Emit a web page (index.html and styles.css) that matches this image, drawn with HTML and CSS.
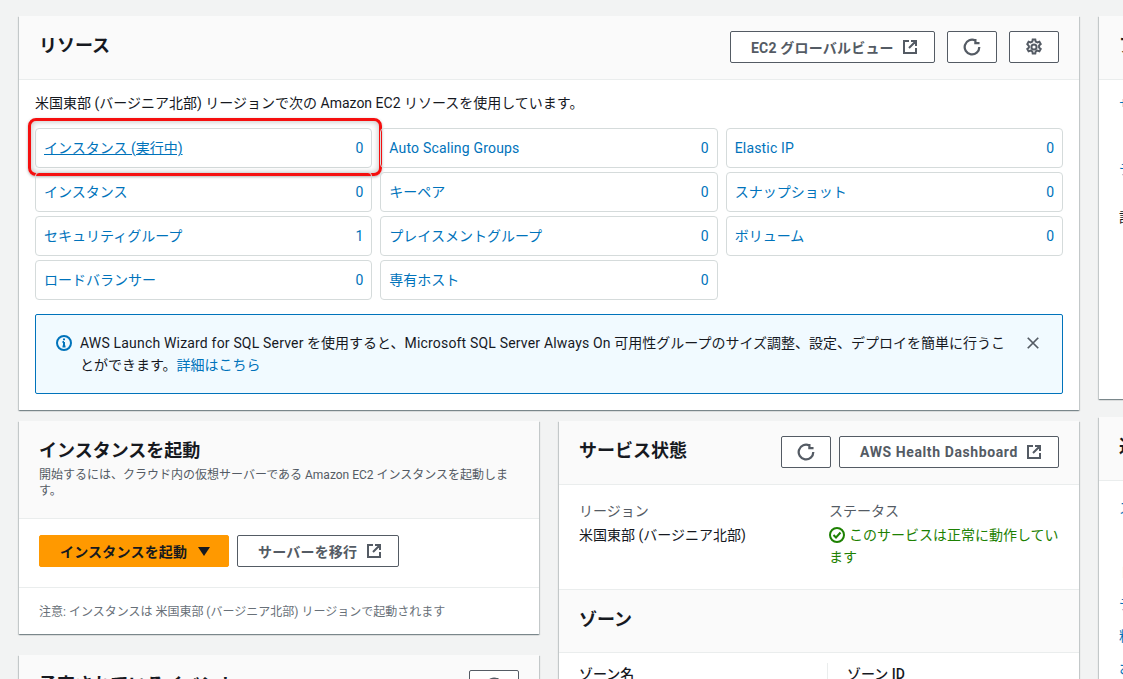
FILE: index.html
```html
<!DOCTYPE html>
<html lang="ja">
  <head>
    <meta charset="UTF-8" />
    <title>EC2 ダッシュボード</title>
    <link rel="stylesheet" href="styles.css">
  </head>
  <body>
    <div class="page">
      <div class="main">
        <section class="card">
          <div class="card-head">
            <h2>リソース</h2>
            <div class="actions">
              <button class="btn global">EC2 グローバルビュー
                <svg class="icon" viewBox="0 0 16 16"><path d="M7 2H2v12h12V9M9 2h5v5M14 2L7 9" /></svg>
              </button>
              <button class="btn square">
                <svg class="icon large" viewBox="0 0 16 16"><path d="M14.5 8A6.5 6.5 0 1 1 11 2.3M11 .8v3.7h3.7" /></svg>
              </button>
              <button class="btn square">
                <svg class="icon large" viewBox="0 0 18 18"><circle cx="9" cy="9" r="2.6" /><path d="M7.7 1.5h2.6l.4 2.1 1.7.9 2-.7 1.3 2.3-1.6 1.4v2l1.6 1.4-1.3 2.3-2-.7-1.7.9-.4 2.1H7.7l-.4-2.1-1.7-.9-2 .7-1.3-2.3 1.6-1.4V8L2.3 6.1l1.3-2.3 2 .7 1.7-.9z" /></svg>
              </button>
            </div>
          </div>
          <div class="card-body">
            <p class="intro">米国東部 (バージニア北部) リージョンで次の Amazon EC2 リソースを使用しています。</p>
            <div class="resource-grid">
              <a class="resource active"><span class="name">インスタンス (実行中)</span><span>0</span></a>
              <a class="resource"><span class="en">Auto Scaling Groups</span><span>0</span></a>
              <a class="resource"><span class="en">Elastic IP</span><span>0</span></a>
              <a class="resource"><span>インスタンス</span><span>0</span></a>
              <a class="resource"><span>キーペア</span><span>0</span></a>
              <a class="resource"><span>スナップショット</span><span>0</span></a>
              <a class="resource"><span>セキュリティグループ</span><span>1</span></a>
              <a class="resource"><span>プレイスメントグループ</span><span>0</span></a>
              <a class="resource"><span>ボリューム</span><span>0</span></a>
              <a class="resource"><span>ロードバランサー</span><span>0</span></a>
              <a class="resource"><span>専有ホスト</span><span>0</span></a>
            </div>
            <div class="notice">
              <svg class="info" viewBox="0 0 16 16"><circle cx="8" cy="8" r="7" /><path d="M8 7v4.5M6.5 11.5h3M6.5 7H8" /><path d="M8 3.6v1.6" /></svg>
              <p><span class="en">AWS Launch Wizard for SQL Server</span> を使用すると、<span class="en">Microsoft SQL Server Always On</span> 可用性グループのサイズ調整、設定、デプロイを簡単に行うことができます。<a>詳細はこちら</a></p>
              <svg class="close" viewBox="0 0 16 16"><path d="M2 2l12 12M14 2L2 14" /></svg>
            </div>
          </div>
        </section>

        <div class="columns">
          <div class="column">
            <section class="card">
              <div class="card-head launch-head">
                <h2>インスタンスを起動</h2>
                <p class="sub">開始するには、クラウド内の仮想サーバーである Amazon EC2 インスタンスを起動します。</p>
              </div>
              <div class="launch-actions">
                <button class="btn primary">インスタンスを起動 <i class="caret"></i></button>
                <button class="btn migrate">サーバーを移行
                  <svg class="icon" viewBox="0 0 16 16"><path d="M7 2H2v12h12V9M9 2h5v5M14 2L7 9" /></svg>
                </button>
              </div>
              <div class="launch-note">注意: インスタンスは 米国東部 (バージニア北部) リージョンで起動されます</div>
            </section>
            <section class="card">
              <div class="card-head">
                <h2>予定されているイベント</h2>
                <div class="actions">
                  <button class="btn square">
                    <svg class="icon large" viewBox="0 0 16 16"><path d="M14.5 8A6.5 6.5 0 1 1 11 2.3M11 .8v3.7h3.7" /></svg>
                  </button>
                </div>
              </div>
            </section>
          </div>

          <div class="column">
            <section class="card">
              <div class="card-head">
                <h2>サービス状態</h2>
                <div class="actions tight">
                  <button class="btn square">
                    <svg class="icon large" viewBox="0 0 16 16"><path d="M14.5 8A6.5 6.5 0 1 1 11 2.3M11 .8v3.7h3.7" /></svg>
                  </button>
                  <button class="btn health">AWS Health Dashboard
                    <svg class="icon" viewBox="0 0 16 16"><path d="M7 2H2v12h12V9M9 2h5v5M14 2L7 9" /></svg>
                  </button>
                </div>
              </div>
              <div class="status-grid">
                <div>
                  <div class="label">リージョン</div>
                  <div>米国東部 (バージニア北部)</div>
                </div>
                <div>
                  <div class="label">ステータス</div>
                  <div class="ok">
                    <svg class="check" viewBox="0 0 16 16"><circle cx="8" cy="8" r="7" /><path d="M4.5 8l2.5 2.5 4.5-5" /></svg>このサービスは正常に動作しています
                  </div>
                </div>
              </div>
              <div class="card-head zone-head"><h2>ゾーン</h2></div>
              <div class="zone-table">
                <div>ゾーン名</div>
                <div class="zone-id">ゾーン ID</div>
              </div>
            </section>
          </div>
        </div>
      </div>

      <div class="side">
        <section class="card side-top">
          <div class="card-head"><h2>アカウントの属性</h2></div>
          <div class="side-links">
            <a class="row-1">サポートされているプラットフォーム</a>
            <a class="row-2">デフォルト VPC</a>
            <p>設定</p>
          </div>
        </section>
        <section class="card">
          <div class="card-head"><h2>追加情報</h2></div>
          <div class="side-links more">
            <a>スタートガイド</a>
            <a>ドキュメント</a>
            <a>デベロッパーフォーラム</a>
            <a>料金</a>
            <a>お問い合わせ</a>
          </div>
        </section>
      </div>
    </div>
  </body>
</html>
```

FILE: styles.css
```css
html,
body {
  height: 100%;
}

body {
  margin: 0;
  overflow: hidden;
  background-color: #f2f3f3;
  color: #16191f;
  font-family: Roboto, "Noto Sans CJK JP", sans-serif;
  font-size: 14px;
  line-height: 22px;
}

.page {
  display: flex;
  gap: 20px;
  width: 1400px;
  padding: 16px 0 0 19px;
}

.main {
  width: 1060px;
  flex-shrink: 0;
}

.side {
  width: 300px;
  flex-shrink: 0;
}

.card {
  background-color: #fff;
  box-shadow: 0 1px 1px 0 rgba(0, 28, 36, 0.3), 1px 1px 1px 0 rgba(0, 28, 36, 0.15), -1px 1px 1px 0 rgba(0, 28, 36, 0.15);
}

.card-head {
  display: flex;
  justify-content: space-between;
  align-items: flex-start;
  height: 64px;
  padding: 15px 20px 0;
  box-sizing: border-box;
  background-color: #fafafa;
  border-bottom: 1px solid #eaeded;
}

.card-head h2 {
  margin: 1px 0 0;
  font-size: 18px;
  line-height: 28px;
  font-weight: 700;
}

.en {
  letter-spacing: 0.18px;
}

.actions {
  display: flex;
  gap: 12px;
}

.actions.tight {
  gap: 8px;
}

.btn {
  display: inline-flex;
  align-items: center;
  justify-content: space-between;
  height: 32px;
  padding: 0 16px 0 20px;
  box-sizing: border-box;
  background-color: #fff;
  border: 1px solid #545b64;
  border-radius: 2px;
  color: #545b64;
  font-family: inherit;
  font-size: 14px;
  font-weight: 700;
  letter-spacing: 0.2px;
  white-space: nowrap;
}

.btn.global {
  width: 205px;
}

.btn.health {
  width: 220px;
  letter-spacing: 0.6px;
}

.btn.migrate {
  width: 162px;
}

.btn.square {
  width: 50px;
  padding: 0;
  justify-content: center;
}

.btn.primary {
  width: 190px;
  padding-right: 18px;
  background-color: #ff9900;
  border-color: #ff9900;
  color: #16191f;
}

.icon {
  width: 16px;
  height: 16px;
  fill: none;
  stroke: #545b64;
  stroke-width: 2;
}

.icon.large {
  width: 18px;
  height: 18px;
}

.caret {
  width: 0;
  height: 0;
  border-left: 6px solid transparent;
  border-right: 6px solid transparent;
  border-top: 9px solid #16191f;
}

.card-body {
  padding: 12px 16px 16px;
}

.intro {
  margin: 0 0 14px;
}

.resource-grid {
  display: grid;
  grid-template-columns: repeat(3, 1fr);
  gap: 4px 8px;
}

.resource {
  position: relative;
  display: flex;
  justify-content: space-between;
  height: 40px;
  padding: 8px;
  box-sizing: border-box;
  border: 1px solid #d5dbdb;
  border-radius: 4px;
  color: #0073bb;
}

.resource.active .name {
  text-decoration: underline;
}

/* red highlight drawn onto the screenshot */
.resource.active::after {
  content: "";
  position: absolute;
  top: -11px;
  left: -8px;
  right: -11px;
  bottom: -9px;
  border: 3px solid #f50f0f;
  border-radius: 8px;
  box-shadow: 0 1px 3px rgba(0, 0, 0, 0.3), inset 0 0 6px rgba(0, 0, 0, 0.28);
}

.notice {
  display: flex;
  align-items: flex-start;
  gap: 8px;
  height: 80px;
  margin-top: 14px;
  padding: 17px 20px;
  box-sizing: border-box;
  background-color: #f1faff;
  border: 1px solid #0073bb;
  border-radius: 2px;
}

.notice p {
  margin: 0;
  flex: 1;
}

.notice a,
.side-links a {
  color: #0073bb;
}

.info {
  width: 16px;
  height: 16px;
  margin-top: 3px;
  fill: none;
  stroke: #0073bb;
  stroke-width: 2;
}

.close {
  width: 14px;
  height: 14px;
  margin: 4px 2px 0 12px;
  fill: none;
  stroke: #545b64;
  stroke-width: 2;
}

.columns {
  display: flex;
  gap: 20px;
  margin-top: 11px;
}

.column {
  display: flex;
  flex-direction: column;
  gap: 21px;
  width: 520px;
  flex-shrink: 0;
}

.launch-head {
  display: block;
  height: 98px;
}

.sub {
  margin: 2px 0 0;
  color: #545b64;
  font-size: 12px;
  line-height: 16px;
}

.launch-actions {
  display: flex;
  gap: 8px;
  padding: 16px 20px 20px;
  border-bottom: 1px solid #eaeded;
}

.launch-note {
  padding: 13px 20px 11px;
  color: #687078;
  font-size: 12px;
}

.status-grid {
  display: grid;
  grid-template-columns: 250px 230px;
  padding: 15px 20px 21px;
}

.label {
  margin-bottom: 2px;
  color: #545b64;
}

.ok {
  color: #1d8102;
}

.check {
  width: 16px;
  height: 16px;
  margin-right: 4px;
  vertical-align: -3px;
  fill: none;
  stroke: #1d8102;
  stroke-width: 2;
}

.zone-head {
  border-top: 1px solid #eaeded;
}

.zone-table {
  display: grid;
  grid-template-columns: 248px 1fr;
  padding: 10px 20px;
  font-weight: 500;
}

.zone-id {
  padding-left: 19px;
  border-left: 1px solid #eaeded;
}

.side-top {
  height: 383px;
  margin-bottom: 18px;
}

.side-links {
  display: flex;
  flex-direction: column;
  padding: 14px 20px;
}

.side-links .row-1 {
  margin-bottom: 42px;
}

.side-links .row-2 {
  margin-bottom: 26px;
}

.side-links.more {
  padding-top: 16px;
}

.side-links.more a {
  margin-bottom: 10px;
}

.side-links.more a:first-child {
  margin-bottom: 42px;
}

.side-links p {
  margin: 0;
}
```
